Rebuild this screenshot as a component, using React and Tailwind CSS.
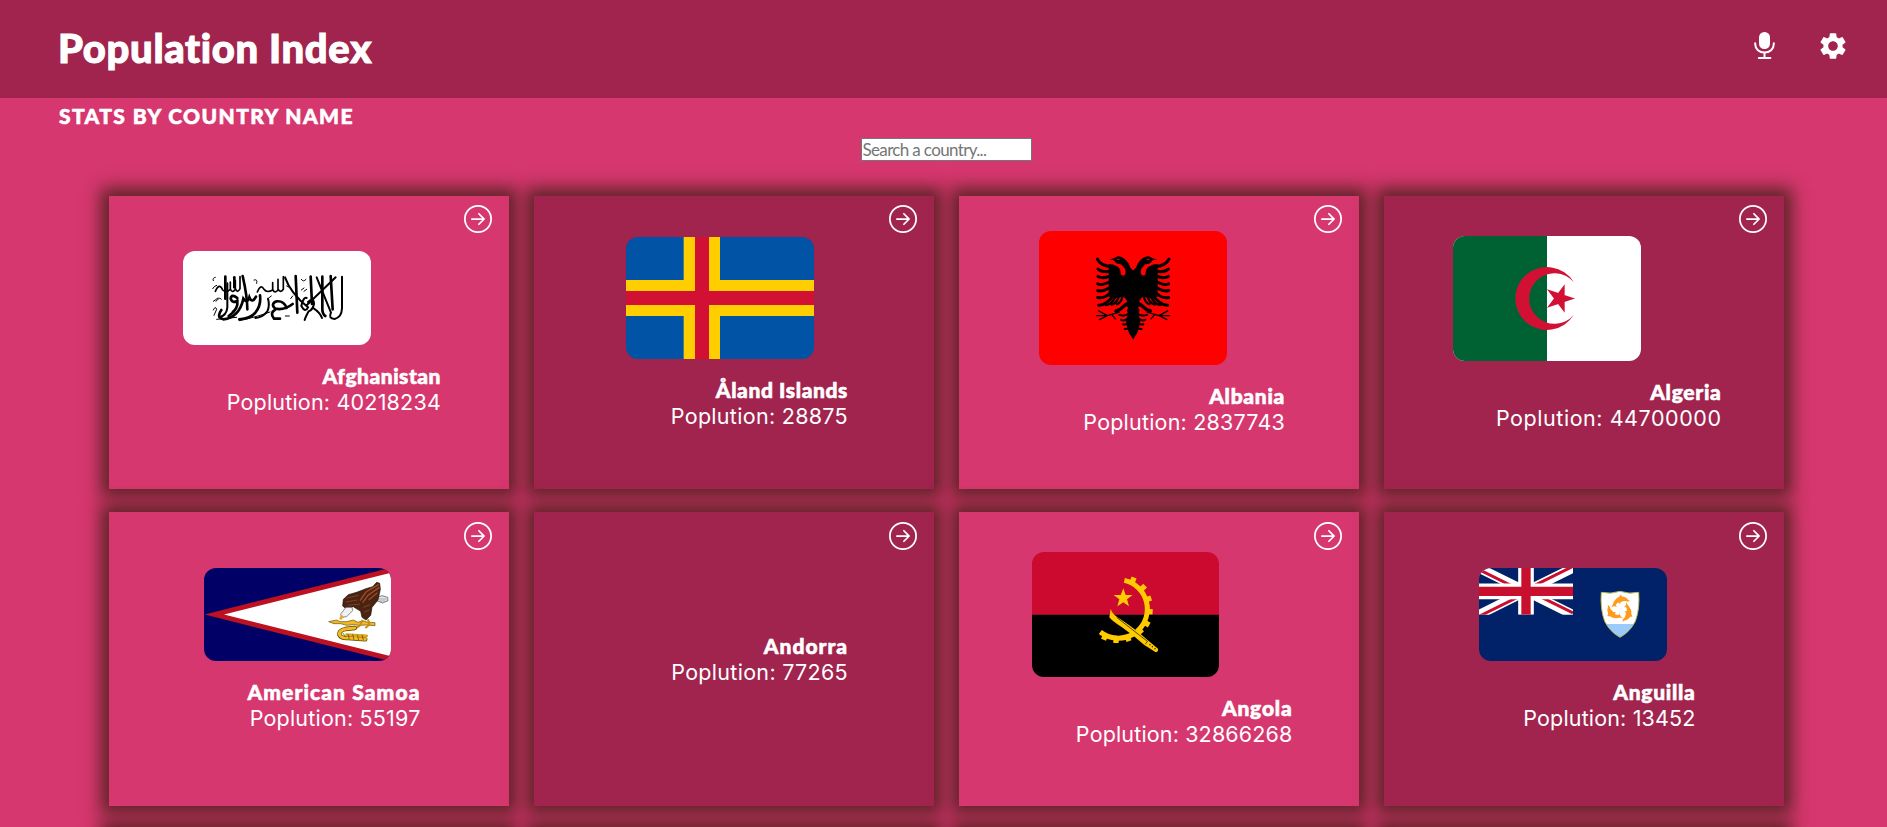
import React from "react";
import { BsArrowRightCircle } from "react-icons/bs";
import { MdSettings } from "react-icons/md";

function MicIcon() {
  return (
    <svg className="h-[27px] w-[21px]" viewBox="0 0 21 27" fill="none">
      <rect x="5" y="0" width="11" height="17" rx="5.3" fill="#fff" />
      <path d="M1.2 11.2v.8c0 5 4.1 8.6 9.3 8.6s9.3-3.6 9.3-8.6v-.8" stroke="#fff" strokeWidth="2" strokeLinecap="round" />
      <path d="M10.5 20.5v5" stroke="#fff" strokeWidth="2" />
      <path d="M4.8 26h11.6" stroke="#fff" strokeWidth="2" strokeLinecap="round" />
    </svg>
  );
}

function Afghanistan() {
  return (
    <svg viewBox="69 63 564 282" preserveAspectRatio="none" className="h-full w-full">
      <rect x="69" y="63" width="564" height="282" fill="#fff" />
      <g fill="none" stroke="#000" strokeLinecap="round">
        <g strokeWidth="8">
          <path d="M546 140V235Q545 262 524 267Q504 266 513 248L470 142" strokeWidth="6" />
          <path d="M512 138L518 238" />
          <path d="M527 142L440 226" strokeWidth="6" />
          <path d="M487 140V232Q486 252 496 258" />
          <path d="M452 140L456 222" />
          <path d="M407 138L412 248" />
          <path d="M375 142Q392 190 444 232Q436 250 424 228Q430 200 440 204" strokeWidth="6" />
          <path d="M196 140V206" />
          <path d="M223 142V172" />
          <path d="M248 138Q262 200 262 238" />
        </g>
        <g strokeWidth="6">
          <path d="M444 216Q462 200 462 222Q458 240 446 244Q436 262 434 270M462 236Q480 248 486 264" />
          <path d="M398 222Q372 242 346 236Q330 222 350 214Q372 212 380 234M346 238Q328 250 342 266H360" strokeWidth="8" />
          <path d="M324 206Q330 226 322 244Q308 262 286 264" />
          <path d="M300 196Q304 226 286 248Q272 266 238 268" strokeWidth="8" />
          <path d="M288 200Q276 222 268 202Q262 222 250 206Q238 262 190 268Q168 262 184 240" strokeWidth="8" />
          <path d="M232 204Q214 190 212 206Q218 222 232 212Q236 238 206 258" strokeWidth="8" />
          <path d="M202 160V232Q200 256 178 262" />
        </g>
        <g strokeWidth="5">
          <path d="M240 140V176Q232 192 226 176V152M226 178Q216 192 211 176V156M211 178Q198 190 188 180Q178 156 166 184" />
          <path d="M370 140V178Q362 190 354 178V148M354 180Q344 192 338 178V158M338 180Q320 190 312 178Q302 160 292 186" />
          <path d="M160 152Q156 144 166 142M158 176Q162 168 170 166M168 214Q180 198 184 208M160 240Q166 226 170 238L162 256" strokeWidth="3" />
          <path d="M424 148Q430 158 438 148M424 180L432 174M432 184L440 178M326 204L334 198M282 150Q294 146 290 160M380 168L392 174M376 258H388M392 206L398 198M216 244L226 238M160 214L174 204" strokeWidth="3" />
          <path d="M238 272Q300 258 330 246M170 268L230 262" strokeWidth="3" />
        </g>
      </g>
    </svg>
  );
}

function Aland() {
  return (
    <svg viewBox="438 171 564 366" preserveAspectRatio="none" className="h-full w-full">
      <rect x="438" y="171" width="564" height="366" fill="#0053a5" />
      <path d="M611 171h109v366h-109zM438 300h564v108h-564z" fill="#ffce00" />
      <path d="M645 171h42v366h-42zM438 333h564v42h-564z" fill="#d21034" />
    </svg>
  );
}

function EagleHalf() {
  return (
    <g>
      <path
        d="M340 212L331 203L326 190L316 178Q304 167 291 169L280 175L266 178L280 180L290 190L304 193L315 206Q320 222 312 226Q304 228 302 222Q303 206 292 199Q280 192 266 192L266 290L286 294L312 290L322 304L308 320L318 326L324 340L318 362L322 384L328 400L340 418Z"
        fill="#000"
      />
      <path d="M288 179l8-3 4 4z" fill="#f00" />
      <path d="M318 318Q302 324 304 342Q316 340 325 322Z" fill="#f00" />
      <g stroke="#000" strokeWidth="9" strokeLinecap="round" fill="none">
        <path d="M232 177Q241 197 276 200" />
        <path d="M234 207Q247 219 276 212" />
        <path d="M234 229Q249 238 276 225" />
        <path d="M233 251Q251 258 276 240" />
        <path d="M233 271Q253 277 278 256" />
        <path d="M233 292Q255 297 280 270" />
        <path d="M236 315Q257 317 284 282" />
        <path d="M257 315Q276 313 286 290" strokeWidth="7" />
        <path d="M275 313Q290 310 297 288" strokeWidth="7" />
        <path d="M291 312Q303 308 308 288" strokeWidth="7" />
      </g>
      <g stroke="#000" fill="none" strokeLinecap="round">
        <path d="M318 312L300 328L288 332" strokeWidth="10" />
        <path d="M298 336L262 346H230M262 346L236 332M262 346L238 358M276 344L286 356" strokeWidth="4" />
        <path d="M326 340Q314 350 298 344M326 352Q316 364 303 359M328 364Q320 376 309 372M330 378Q324 388 314 386" strokeWidth="6" />
      </g>
    </g>
  );
}

function Albania() {
  return (
    <svg viewBox="57 93 564 401" preserveAspectRatio="none" className="h-full w-full">
      <rect x="57" y="93" width="564" height="401" fill="#f00" />
      <EagleHalf />
      <g transform="translate(679 0) scale(-1 1)">
        <EagleHalf />
      </g>
    </svg>
  );
}

function Algeria() {
  return (
    <svg viewBox="99 138 564 375" preserveAspectRatio="none" className="h-full w-full">
      <rect x="99" y="138" width="564" height="375" fill="#fff" />
      <rect x="99" y="138" width="282" height="375" fill="#006233" />
      <path d="M461 276A94.5 94.5 0 1 0 461 375A76 76 0 1 1 461 276Z" fill="#d21034" />
      <path d="M465 325.5L381 298L434 368.500V283L381 353Z" fill="#d21034" />
    </svg>
  );
}

function AmericanSamoa() {
  return (
    <svg viewBox="72 204 561 279" preserveAspectRatio="none" className="h-full w-full">
      <rect x="72" y="204" width="561" height="279" fill="#006" />
      <path d="M74 343.500L633 203V484Z" fill="#bd1021" />
      <path d="M132 343.500L633 218V469Z" fill="#fff" />
      <path d="M590 292L606 287L623 292L624 302L608 309L590 302Z" fill="#e4e4e8" stroke="#444" strokeWidth="2" />
      <path d="M596 297L620 297M598 303L616 303" stroke="#777" strokeWidth="1.500" />
      <path d="M599 250L590 247L578 260L558 266L530 277L505 284L490 298L488 318L498 326L520 320L542 334L546 352L558 360L572 346L576 322L594 300L601 268Z" fill="#4a2413" stroke="#1d0e08" strokeWidth="2" />
      <path d="M596 254L558 276L540 302M598 262L564 286L548 308M592 278L566 300" stroke="#a04a28" strokeWidth="4" fill="none" />
      <path d="M500 294L536 286M498 306L532 300M504 316L540 312M550 322L570 314M552 336L568 330" stroke="#8a4526" strokeWidth="2.500" fill="none" />
      <path d="M498 322L516 322L518 332L500 350L484 352L482 342Z" fill="#f1f1f3" stroke="#555" strokeWidth="2" />
      <path d="M484 344L492 350L484 360L477 356Z" fill="#e9a92b" />
      <path d="M446 365L470 360L480 365H500L520 360L534 367L548 362L560 366L585 368V377L560 375L536 376L520 374L500 376L482 371L462 371Z" fill="#eebb22" stroke="#6b4a0c" strokeWidth="2" />
      <path d="M548 360L540 376L526 386M564 358L568 374L556 384" stroke="#c98d12" strokeWidth="6" fill="none" />
      <path d="M524 384L496 387Q476 392 478 404Q484 416 506 414L556 418" stroke="#54400c" strokeWidth="13" fill="none" strokeLinecap="round" />
      <path d="M524 384L496 387Q476 392 478 404Q484 416 506 414L556 418" stroke="#f0bd20" strokeWidth="9" fill="none" strokeLinecap="round" />
      <path d="M500 404L560 408" stroke="#dca71c" strokeWidth="9" strokeLinecap="round" />
      <path d="M504 402L508 418M518 402L522 420M532 404L536 420M546 404L550 420M488 398L496 410" stroke="#54400c" strokeWidth="2" />
    </svg>
  );
}

function Angola() {
  return (
    <svg viewBox="96 66 561 375" preserveAspectRatio="none" className="h-full w-full">
      <rect x="96" y="66" width="561" height="188" fill="#cc092f" />
      <rect x="96" y="254" width="561" height="187" fill="#000" />
      <path d="M373 151A88 88 0 0 1 411 304" stroke="#ffcb00" strokeWidth="15" fill="none" />
      <path d="M400 312A88 88 0 0 1 301 306" stroke="#ffcb00" strokeWidth="15" fill="none" />
      <g fill="#ffcb00">
        <path d="M-8-9H8V9H-8Z" transform="translate(399 151) rotate(22)" />
        <path d="M-8-9H8V9H-8Z" transform="translate(429 173) rotate(45)" />
        <path d="M-8-9H8V9H-8Z" transform="translate(445 207) rotate(72)" />
        <path d="M-8-9H8V9H-8Z" transform="translate(449 245) rotate(95)" />
        <path d="M-8-9H8V9H-8Z" transform="translate(440 281) rotate(120)" />
        <path d="M-8-9H8V9H-8Z" transform="translate(420 303) rotate(140)" />
        <path d="M-8-9H8V9H-8Z" transform="translate(384 325) rotate(160)" />
        <path d="M-8-9H8V9H-8Z" transform="translate(348 330)" />
        <path d="M-8-9H8V9H-8Z" transform="translate(314 321) rotate(22)" />
        <path d="M370 175L377 195H398L381 208L387 229L370 217L352 229L358 208L341 195H362Z" />
        <path d="M332 237Q338 254 356 264Q410 300 438 326L474 356Q476 366 466 366L432 344Q400 316 366 292Q334 272 328 262Z" />
      </g>
      <path d="M350 262L442 334" stroke="#000" strokeWidth="2" />
      <path d="M436 342L443 334" stroke="#000" strokeWidth="2" />
      <g fill="#000">
        <circle cx="450" cy="344" r="2" />
        <circle cx="457" cy="350" r="2" />
        <circle cx="465" cy="356" r="2" />
      </g>
    </svg>
  );
}

function Dolphin() {
  return (
    <path
      d="M-27 -1Q-22 -19 -6 -26Q-3 -31 -1 -33L3 -27Q17 -26 25 -15L30 -14L24 -10Q12 -15 0 -9L-5 -2L-8 -8Q-16 -4 -18 3L-12 7L-24 5L-32 9Z"
      fill="#ff9a1c"
    />
  );
}

function Anguilla() {
  return (
    <svg viewBox="117 84 564 279" preserveAspectRatio="none" className="h-full w-full">
      <defs>
        <clipPath id="canton">
          <rect x="117" y="84" width="282" height="140" />
        </clipPath>
        <clipPath id="shield">
          <path d="M484 157Q514 163 540 154Q566 163 596 157Q600 206 586 244Q570 276 540 292Q510 276 494 244Q480 206 484 157Z" />
        </clipPath>
      </defs>
      <rect x="117" y="84" width="564" height="279" fill="#012169" />
      <g clipPath="url(#canton)">
        <path d="M117 84L399 224M399 84L117 224" stroke="#fff" strokeWidth="28" />
        <path d="M117 89L258 159M399 219L258 149M399 79L258 149M117 229L258 159" stroke="#c8102e" strokeWidth="9" />
        <path d="M258 84V224M117 154H399" stroke="#fff" strokeWidth="47" />
        <path d="M258 84V224M117 154H399" stroke="#c8102e" strokeWidth="28" />
      </g>
      <g clipPath="url(#shield)">
        <rect x="480" y="150" width="120" height="102" fill="#fff" />
        <rect x="480" y="252" width="120" height="42" fill="#9acbfa" />
      </g>
      <path d="M484 157Q514 163 540 154Q566 163 596 157Q600 206 586 244Q570 276 540 292Q510 276 494 244Q480 206 484 157Z" fill="none" stroke="#b9bc5a" strokeWidth="3" />
      <g transform="translate(540 208)">
        <g transform="translate(3 -14) scale(.9)"><Dolphin /></g>
        <g transform="translate(11 8) rotate(120) scale(.9)"><Dolphin /></g>
        <g transform="translate(-13 4) rotate(240) scale(.9)"><Dolphin /></g>
      </g>
    </svg>
  );
}

const COUNTRIES = [
  { name: "Afghanistan", population: 40218234, Flag: Afghanistan, flag: "h-[94px] w-[188px]", width: "w-[258px]", nameCls: "tracking-[0.5px]", popCls: "tracking-[0.2px]" },
  { name: "Åland Islands", population: 28875, Flag: Aland, flag: "h-[122px] w-[188px]", width: "w-[222px]", nameCls: "tracking-[0.6px]", popCls: "tracking-[0.3px]" },
  { name: "Albania", population: 2837743, Flag: Albania, flag: "h-[134px] w-[188px]", width: "w-[246px]", nameCls: "tracking-[0.7px]", popCls: "tracking-[0.2px]" },
  { name: "Algeria", population: 44700000, Flag: Algeria, flag: "h-[125px] w-[188px]", width: "w-[269px]", nameCls: "tracking-[0.7px]", popCls: "tracking-[0.55px]" },
  { name: "American Samoa", population: 55197, Flag: AmericanSamoa, flag: "h-[93px] w-[187px]", width: "w-[217px]", nameCls: "tracking-[1.1px]", popCls: "tracking-[0.2px]" },
  { name: "Andorra", population: 77265, width: "w-[222px]", nameCls: "tracking-[1px]", popCls: "tracking-[0.3px]" },
  { name: "Angola", population: 32866268, Flag: Angola, flag: "h-[125px] w-[187px]", width: "w-[261px]", nameCls: "tracking-[0.8px]", popCls: "tracking-[0.15px]" },
  { name: "Anguilla", population: 13452, Flag: Anguilla, flag: "h-[93px] w-[188px]", width: "w-[217px]", nameCls: "tracking-[0.7px]", popCls: "tracking-[0.15px]" },
];

function CountryCard({ country, dark, arrow }) {
  const { name, population, Flag, flag, width, nameCls, popCls } = country;
  return (
    <article
      className={`relative flex h-full flex-col items-center justify-center pl-1.5 shadow-[0_0_16px_8px_#5d2326] ${dark ? "bg-[#a0244e]" : "bg-[#d6376e]"}`}
    >
      <BsArrowRightCircle className={`absolute right-[17px] size-7 ${arrow}`} />
      <div className={`flex flex-col ${width}`}>
        {Flag && (
          <div className={`overflow-hidden rounded-xl ${flag}`}>
            <Flag />
          </div>
        )}
        <div className="flex flex-col items-end pt-[18px] pb-[19px] whitespace-nowrap">
          <h3 className={`text-[21px] leading-[26px] font-black [-webkit-text-stroke:0.6px_white] ${nameCls}`}>{name}</h3>
          <p className={`font-[Inter,sans-serif] text-[21.5px] leading-[26px] font-normal ${popCls}`}>Poplution: {population}</p>
        </div>
      </div>
    </article>
  );
}

export default function App() {
  return (
    <div className="h-[827px] w-full overflow-hidden bg-[#d6376e] font-[Lato,sans-serif] text-white">
      <header className="flex h-[98px] items-center justify-between bg-[#a0244e] pr-[38px] pl-[58px]">
        <h1 className="pb-[2px] text-[40px] leading-none font-black tracking-[0.65px] [-webkit-text-stroke:1px_white]">Population Index</h1>
        <div className="flex items-center gap-[42px] pb-[7px]">
          <MicIcon />
          <MdSettings className="size-8" />
        </div>
      </header>
      <h2 className="pt-[5px] pl-[59px] text-[21px] leading-[26px] font-black tracking-[1.4px] [-webkit-text-stroke:0.6px_white]">STATS BY COUNTRY NAME</h2>
      <div className="flex justify-center pt-[9px] pl-[5px]">
        <input
          className="h-[23px] w-[171px] border border-[#767676] bg-white px-px pb-px text-[17px] leading-5 tracking-[-0.65px] text-black placeholder:text-[#757575]"
          placeholder="Search a country..."
        />
      </div>
      <main className="grid grid-cols-[repeat(4,400px)] grid-rows-[293px_294px_294px] gap-x-[25px] gap-y-[23px] pt-[35px] pl-[109px]">
        {COUNTRIES.map((c, i) => (
          <CountryCard key={c.name} country={c} dark={i % 2 === 1} arrow={i < 4 ? "top-[9px]" : "top-[10px]"} />
        ))}
        {[0, 1, 2, 3].map((i) => (
          <article key={i} className={`shadow-[0_0_16px_8px_#5d2326] ${i % 2 ? "bg-[#a0244e]" : "bg-[#d6376e]"}`} />
        ))}
      </main>
    </div>
  );
}
